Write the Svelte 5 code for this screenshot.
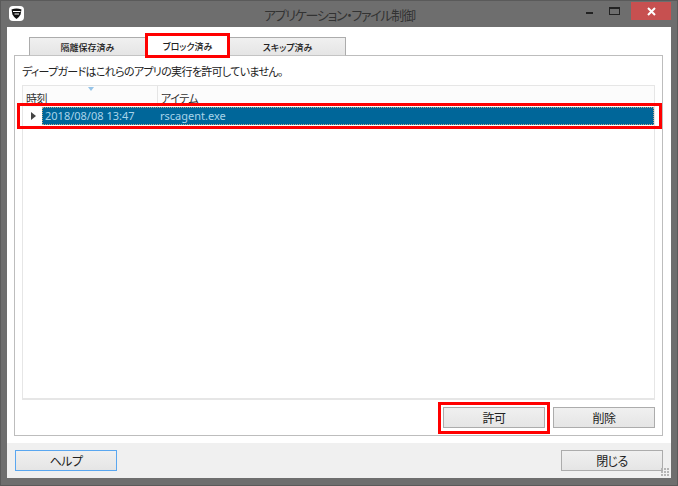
<script>
  let tabs = [
    { label: "隔離保存済み", active: false },
    { label: "ブロック済み", active: true },
    { label: "スキップ済み", active: false },
  ];
</script>

<div class="window">
  <div class="titlebar">
    <span class="app-icon">
      <svg width="15" height="15" viewBox="0 0 15 15">
        <path d="M2.5 3.5Q7.5 1.5 12.5 3.5L11.5 8.5Q10 11.5 7.5 13Q5 11.5 3.5 8.5Z" fill="#111" />
        <path d="M4 5.5H11.5M5.5 8H10" stroke="#fff" stroke-width="1" />
      </svg>
    </span>
    <span class="title">アプリケーション・ファイル制御</span>
    <div class="controls">
      <span class="min"></span>
      <span class="max"></span>
      <span class="close">
        <svg width="9" height="9" viewBox="0 0 9 9">
          <path d="M1 1l7 7M8 1L1 8" stroke="#fff" stroke-width="2" />
        </svg>
      </span>
    </div>
  </div>

  <div class="client">
    <div class="main">
      <div class="tabs">
        {#each tabs as tab}
          <div class="tab" class:active={tab.active}>{tab.label}</div>
        {/each}
      </div>
      <div class="panel">
        <p class="desc">ディープガードはこれらのアプリの実行を許可していません。</p>
        <div class="list">
          <div class="head">
            <span class="sort"></span>
            <div class="col-time">時刻</div>
            <div class="col-item">アイテム</div>
          </div>
          <div class="row">
            <span class="arrow"></span>
            <div class="selected">
              <div class="col-time">2018/08/08 13:47</div>
              <div class="col-item">rscagent.exe</div>
            </div>
          </div>
        </div>
        <div class="actions">
          <button>許可</button>
          <button>削除</button>
        </div>
      </div>
    </div>
    <div class="footer">
      <button class="help">ヘルプ</button>
      <button>閉じる</button>
      <span class="grip"></span>
    </div>
  </div>

  <div class="mark mark-tab"></div>
  <div class="mark mark-row"></div>
  <div class="mark mark-btn"></div>
</div>

<style>
  :global(body) {
    margin: 0;
  }
  .window {
    position: relative;
    width: 678px;
    height: 486px;
    box-sizing: border-box;
    background: #6e6e6e;
    border: 1px solid #5a5a5a;
    padding: 0 6px 7px;
    display: flex;
    flex-direction: column;
    overflow: hidden;
    font-family: "Noto Sans CJK JP", "Liberation Sans", sans-serif;
    font-feature-settings: "palt";
    color: #222;
  }
  .titlebar {
    height: 26px;
    flex: none;
    display: flex;
    align-items: center;
    position: relative;
  }
  .app-icon {
    width: 15px;
    height: 15px;
    background: #fff;
    border-radius: 4px;
    margin: -1px 0 0 2px;
    display: flex;
  }
  .title {
    position: absolute;
    left: 257px;
    top: 5px;
    font-size: 13px;
    letter-spacing: -1.3px;
    line-height: 18px;
    color: #333;
  }
  .controls {
    position: absolute;
    top: 0;
    right: 0;
    display: flex;
  }
  .min {
    width: 7px;
    height: 2px;
    background: #222;
    margin: 11px 16px 0 0;
  }
  .max {
    width: 9px;
    height: 5px;
    border: 1px solid #222;
    border-top-width: 2px;
    margin: 6px 11px 0 0;
  }
  .close {
    width: 40px;
    height: 18px;
    background: #c75050;
    display: flex;
    align-items: center;
    justify-content: center;
    margin: 1px 0 0 0;
  }
  .client {
    flex: 1;
    background: #f0f0f0;
    display: flex;
    flex-direction: column;
    min-height: 0;
  }
  .main {
    background: #fff;
    height: 416px;
    flex: none;
    box-sizing: border-box;
    padding: 7px 8px 7px 7px;
    display: flex;
    flex-direction: column;
  }
  .tabs {
    display: flex;
    height: 22px;
    flex: none;
    padding-left: 16px;
    align-items: flex-end;
    position: relative;
    z-index: 1;
    margin-bottom: -1px;
  }
  .tab {
    width: 117px;
    height: 19px;
    box-sizing: border-box;
    border: 1px solid #acacac;
    border-bottom: 1px solid #c4c4c4;
    margin-left: -1px;
    background: linear-gradient(#f0f0f0, #e5e5e5);
    font-size: 9px;
    line-height: 19px;
    text-align: center;
    font-weight: 500;
  }
  .tab.active {
    width: 85px;
    height: 22px;
    background: #fff;
    border-bottom: 1px solid #fff;
    line-height: 23px;
  }
  .panel {
    flex: 1;
    min-height: 0;
    box-sizing: border-box;
    border: 1px solid #bdbdbd;
    background: #fff;
    padding: 0 7px 7px;
    display: flex;
    flex-direction: column;
  }
  .desc {
    margin: 6px 0 0;
    height: 23px;
    flex: none;
    font-size: 11px;
    letter-spacing: -0.68px;
    line-height: 18px;
  }
  .list {
    flex: 1;
    min-height: 0;
    box-sizing: border-box;
    border: 1px solid #e6e6e6;
    border-bottom-width: 2px;
    display: flex;
    flex-direction: column;
  }
  .head {
    height: 21px;
    flex: none;
    display: flex;
    background: #fcfcfc;
    position: relative;
    font-size: 11px;
    letter-spacing: -0.5px;
    line-height: 24px;
    overflow: hidden;
    color: #333;
  }
  .head .col-time {
    border-right: 1px solid #e5e5e5;
  }
  .sort {
    position: absolute;
    left: 65px;
    top: 1px;
    border-left: 3px solid transparent;
    border-right: 3px solid transparent;
    border-top: 4px solid #96c4e8;
  }
  .col-time {
    width: 135px;
    flex: none;
    padding-left: 3px;
    box-sizing: border-box;
  }
  .col-item {
    padding-left: 3px;
  }
  .row {
    height: 18px;
    flex: none;
    display: flex;
    align-items: center;
    background: #fff;
  }
  .arrow {
    width: 0;
    height: 0;
    margin: 0 6px 0 8px;
    border-left: 5px solid #444;
    border-top: 4px solid transparent;
    border-bottom: 4px solid transparent;
  }
  .selected {
    flex: 1;
    height: 18px;
    box-sizing: border-box;
    border: 1px dotted #b9a98a;
    background: #006699;
    display: flex;
    font-family: "Noto Sans", "Liberation Sans", sans-serif;
    font-size: 11px;
    line-height: 15px;
    color: #a8d4ea;
  }
  .selected .col-time {
    width: 117px;
    padding-left: 2px;
  }
  .selected .col-item {
    padding-left: 0;
  }
  .actions {
    flex: none;
    display: flex;
    justify-content: flex-end;
    gap: 8px;
    padding: 7px 0 0 0;
  }
  button {
    width: 102px;
    height: 21px;
    padding: 0;
    box-sizing: border-box;
    border: 1px solid #acacac;
    background: linear-gradient(#f0f0f0, #e5e5e5);
    font-family: inherit;
    font-feature-settings: inherit;
    font-size: 12px;
    letter-spacing: -0.5px;
    color: #222;
  }
  .footer {
    flex: 1;
    display: flex;
    justify-content: space-between;
    align-items: flex-start;
    padding: 7px 8px 0 8px;
    position: relative;
  }
  .help {
    border: 1px solid #5aa7f0;
  }
  .grip {
    position: absolute;
    right: 1px;
    bottom: 1px;
    width: 9px;
    height: 9px;
    background: radial-gradient(circle at 1px 1px, #b5b5b5 1px, transparent 1px) 0 0 / 3px 3px;
  }
  .mark {
    position: absolute;
    z-index: 2;
    box-sizing: border-box;
    border: 3px solid #f00;
    pointer-events: none;
  }
  .mark-tab {
    left: 144px;
    top: 32px;
    width: 85px;
    height: 25px;
  }
  .mark-row {
    left: 16px;
    top: 102px;
    width: 645px;
    height: 26px;
  }
  .mark-btn {
    left: 437px;
    top: 401px;
    width: 112px;
    height: 32px;
  }
</style>
